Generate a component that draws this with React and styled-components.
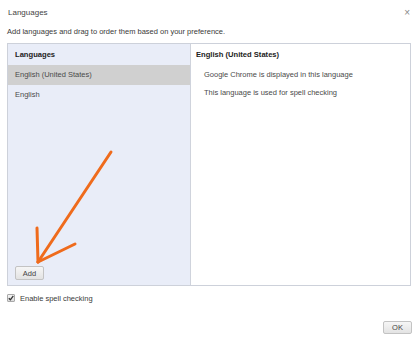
import React from "react";
import styled, { createGlobalStyle } from "styled-components";

const Global = createGlobalStyle`
  html, body { margin: 0; padding: 0; background: #fff; }
  body { font-family: "Liberation Sans", Arial, sans-serif; }
`;

const Dialog = styled.div`
  position: relative;
  width: 420px;
  height: 342px;
  box-sizing: border-box;
  padding: 0 9px 0 7px;
  display: flex;
  flex-direction: column;
  background: #fff;
  color: #3a3a3a;
  font-size: 7.5px;
  overflow: hidden;
`;

const TitleBar = styled.div`
  height: 24px;
  display: flex;
  align-items: center;
  justify-content: space-between;
  padding-left: 1px;
`;

const Title = styled.div`
  font-size: 8px;
  color: #444;
`;

const Close = styled.div`
  font-size: 10px;
  line-height: 10px;
  color: #888;
  margin-right: 1px;
  margin-top: 1px;
`;

const Subtitle = styled.div`
  margin-top: 2px;
  height: 12px;
  line-height: 12px;
`;

const Box = styled.div`
  margin-top: 5px;
  height: 243px;
  box-sizing: border-box;
  border: 1px solid #cdd1da;
  display: grid;
  grid-template-columns: 183px 1fr;
`;

const LeftPanel = styled.div`
  background: #e9edf8;
  border-right: 1px solid #cfd3dc;
  display: flex;
  flex-direction: column;
`;

const PanelHeader = styled.div`
  height: 21px;
  line-height: 21px;
  padding-left: 7px;
  font-weight: bold;
  color: #222;
  font-size: 7.6px;
`;

const LangRow = styled.div`
  height: 20px;
  line-height: 20px;
  padding-left: 7px;
  color: #4a4a4a;
  background: ${(p) => (p.$selected ? "#d0d0d0" : "transparent")};
`;

const Spacer = styled.div`
  flex: 1;
`;

const Button = styled.button`
  box-sizing: border-box;
  width: 29px;
  height: 14px;
  padding: 0;
  border: 1px solid #c3c3c3;
  border-radius: 2px;
  background: linear-gradient(#f6f6f6, #e3e3e3);
  font-family: inherit;
  font-size: 7.5px;
  color: #444;
  display: flex;
  align-items: center;
  justify-content: center;
`;

const AddWrap = styled.div`
  padding: 0 0 5px 7px;
`;

const RightPanel = styled.div`
  display: flex;
  flex-direction: column;
  padding-left: 5px;
`;

const DetailHeader = styled.div`
  height: 22px;
  line-height: 22px;
  font-weight: bold;
  color: #222;
  font-size: 7.6px;
`;

const DetailLine = styled.div`
  height: 18px;
  line-height: 18px;
  padding-left: 8px;
  color: #4a4a4a;
`;

const CheckRow = styled.div`
  margin-top: 6px;
  height: 12px;
  display: flex;
  align-items: center;
  gap: 5px;
`;

const CheckBox = styled.span`
  width: 8px;
  height: 8px;
  box-sizing: border-box;
  border: 1px solid #a9a9a9;
  background: linear-gradient(#f4f4f4, #dcdcdc);
  border-radius: 1px;
  display: flex;
  align-items: center;
  justify-content: center;
`;

const Footer = styled.div`
  margin-top: 17px;
  display: flex;
  justify-content: flex-end;
  margin-right: -1px;
`;

const OkButton = styled(Button)`
  height: 13px;
`;

const Overlay = styled.svg`
  position: absolute;
  left: 0;
  top: 0;
  pointer-events: none;
`;

export default function App() {
  return (
    <>
      <Global />
      <Dialog>
        <TitleBar>
          <Title>Languages</Title>
          <Close>×</Close>
        </TitleBar>
        <Subtitle>Add languages and drag to order them based on your preference.</Subtitle>
        <Box>
          <LeftPanel>
            <PanelHeader>Languages</PanelHeader>
            <LangRow $selected>English (United States)</LangRow>
            <LangRow>English</LangRow>
            <Spacer />
            <AddWrap>
              <Button>Add</Button>
            </AddWrap>
          </LeftPanel>
          <RightPanel>
            <DetailHeader>English (United States)</DetailHeader>
            <DetailLine>Google Chrome is displayed in this language</DetailLine>
            <DetailLine>This language is used for spell checking</DetailLine>
          </RightPanel>
        </Box>
        <CheckRow>
          <CheckBox>
            <svg width="6" height="6" viewBox="0 0 6 6">
              <path d="M0.8 3.2 L2.4 4.8 L5.3 0.9" fill="none" stroke="#333" strokeWidth="1.3" />
            </svg>
          </CheckBox>
          Enable spell checking
        </CheckRow>
        <Footer>
          <OkButton>OK</OkButton>
        </Footer>
        <Overlay width="420" height="342" viewBox="0 0 420 342">
          <g stroke="#ef6b1c" strokeWidth="3" strokeLinecap="round" fill="none">
            <line x1="111" y1="152" x2="38" y2="262" />
            <line x1="38" y1="262" x2="37" y2="228" />
            <line x1="38" y1="262" x2="75" y2="244" />
          </g>
        </Overlay>
      </Dialog>
    </>
  );
}
